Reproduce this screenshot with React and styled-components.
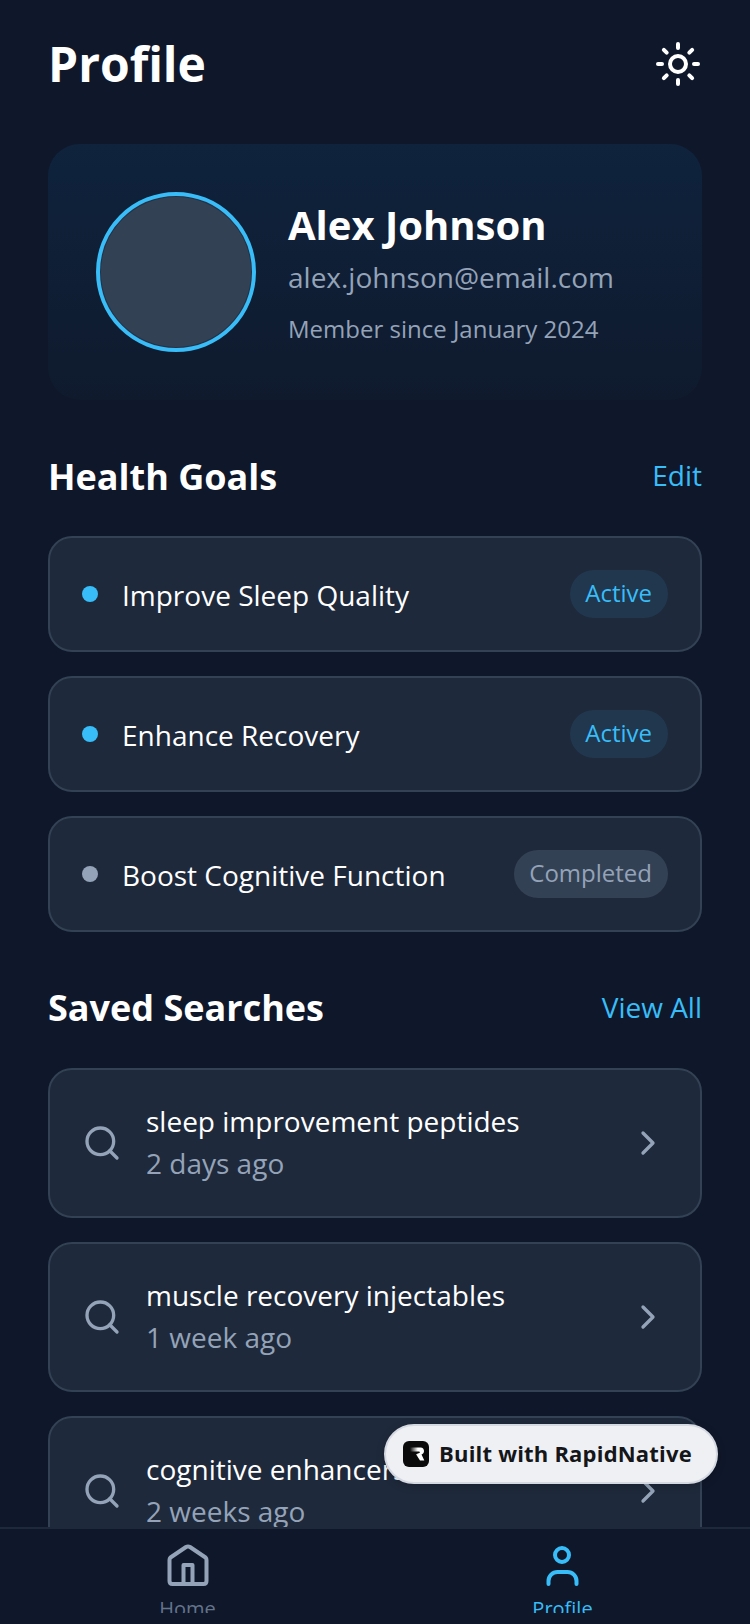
import React from "react";
import styled, { createGlobalStyle } from "styled-components";
import { Sun, Search, ChevronRight } from "lucide-react";

const Global = createGlobalStyle`
  html, body { margin: 0; padding: 0; background: #0f172a; }
  * { box-sizing: border-box; }
`;

const Screen = styled.div`
  position: relative;
  width: 750px;
  height: 1624px;
  display: flex;
  flex-direction: column;
  overflow: hidden;
  background: #0f172a;
  font-family: "Open Sans", "Noto Sans", sans-serif;
  color: #fff;
`;
const Main = styled.main`
  flex: 1;
  min-height: 0;
  overflow: hidden;
  padding: 32px 48px 0;
`;
const Header = styled.header`
  display: flex;
  justify-content: space-between;
  align-items: center;
  height: 64px;
  margin-bottom: 48px;
`;
const Title = styled.h1`
  margin: 0;
  font-size: 48px;
  line-height: 64px;
  font-weight: 700;
`;
const ThemeButton = styled.div`
  display: flex;
  color: #fff;
`;
const ProfileCard = styled.section`
  display: flex;
  align-items: center;
  gap: 32px;
  height: 256px;
  padding: 0 48px;
  border-radius: 32px;
  background: linear-gradient(180deg, #0f233d 0%, #0f1a2d 100%);
`;
const Avatar = styled.div`
  width: 160px;
  height: 160px;
  border-radius: 50%;
  border: 4px solid #38bdf8;
  background: #334155;
  box-shadow: inset 0 0 0 1px rgba(20, 35, 58, 0.5);
  flex: none;
`;
const Identity = styled.div`
  display: flex;
  flex-direction: column;
  padding-top: 6px;
`;
const Name = styled.div`
  font-size: 40px;
  line-height: 48px;
  font-weight: 700;
  margin-bottom: 8px;
`;
const Email = styled.div`
  font-size: 28px;
  line-height: 40px;
  color: #94a3b8;
  margin-bottom: 12px;
`;
const Since = styled.div`
  font-size: 24px;
  line-height: 40px;
  color: #94a3b8;
`;
const SectionHead = styled.div`
  display: flex;
  justify-content: space-between;
  align-items: center;
  height: 48px;
  margin-top: ${(p) => p.$top}px;
  margin-bottom: ${(p) => p.$bottom}px;
`;
const SectionTitle = styled.h2`
  margin: 0;
  font-size: 36px;
  line-height: 48px;
  font-weight: 700;
`;
const SectionLink = styled.span`
  font-size: 28px;
  line-height: 40px;
  color: #38bdf8;
  padding-bottom: ${(p) => p.$lift}px;
`;
const List = styled.div`
  display: flex;
  flex-direction: column;
  gap: 24px;
`;
const GoalRow = styled.div`
  display: flex;
  align-items: center;
  height: 116px;
  padding: 0 32px;
  background: #1e293b;
  border: 2px solid #334155;
  border-radius: 24px;
`;
const Dot = styled.span`
  width: 16px;
  height: 16px;
  border-radius: 50%;
  flex: none;
  background: ${(p) => (p.$active ? "#38bdf8" : "#94a3b8")};
  margin-right: 24px;
`;
const GoalName = styled.span`
  flex: 1;
  font-size: 28px;
  line-height: 40px;
  padding-top: 1px;
`;
const Pill = styled.span`
  height: 48px;
  padding: 0 16px 0 15px;
  border-radius: 24px;
  font-size: 24px;
  line-height: 46px;
  color: ${(p) => (p.$active ? "#38bdf8" : "#94a3b8")};
  background: ${(p) => (p.$active ? "rgba(56,189,248,0.1)" : "#334155")};
`;
const SearchRow = styled.div`
  display: flex;
  align-items: center;
  flex: none;
  height: 150px;
  padding: 0 32px;
  background: #1e293b;
  border: 2px solid #334155;
  border-radius: 24px;
  color: #94a3b8;
`;
const SearchText = styled.div`
  flex: 1;
  margin-left: 24px;
  padding-bottom: 2px;
  display: flex;
  flex-direction: column;
  gap: 2px;
`;
const Query = styled.div`
  font-size: 28px;
  line-height: 40px;
  color: #fff;
`;
const When = styled.div`
  font-size: 28px;
  line-height: 40px;
  color: #94a3b8;
`;
const TabBar = styled.nav`
  flex: none;
  height: 97px;
  display: flex;
  background: #0f172a;
  border-top: 2px solid #1e293b;
`;
const Tab = styled.div`
  flex: 1;
  display: flex;
  flex-direction: column;
  align-items: center;
  padding-top: 14px;
  color: ${(p) => (p.$active ? "#38bdf8" : "#94a3b8")};
`;
const TabLabel = styled.div`
  height: 18px;
  overflow: hidden;
  margin-top: 8px;
  font-size: 20px;
  line-height: 28px;
  color: ${(p) => (p.$active ? "#38bdf8" : "#64748b")};
`;
const Badge = styled.div`
  position: absolute;
  left: 384px;
  top: 1424px;
  width: 334px;
  height: 60px;
  display: flex;
  align-items: center;
  gap: 10px;
  padding-left: 17px;
  border-radius: 30px;
  background: #eff0f3;
  border: 2px solid #d5d9e2;
  box-shadow: 0 2px 8px rgba(0, 0, 0, 0.2);
  color: #14161a;
  font-size: 22px;
  letter-spacing: 0.2px;
  font-weight: 700;
`;
const BadgeText = styled.span`
  position: relative;
  top: -1px;
`;

const Logo = () => (
  <svg width="26" height="26" viewBox="0 0 26 26">
    <defs>
      <linearGradient id="rfade" x1="0" x2="1" y1="0" y2="0">
        <stop offset="0" stopColor="#0b0b0c" />
        <stop offset="0.55" stopColor="#ffffff" />
      </linearGradient>
    </defs>
    <rect width="26" height="26" rx="6" fill="#0b0b0c" />
    <path
      d="M7 6.500h10.500c2.300 0 3.500 1.600 3.500 3.500 0 1.900-1 3-2.500 3.500l2.800 6h-4.300l-4-6.200 3.300-1.300c.9-.4.7-1.600-.3-1.600H7z"
      fill="url(#rfade)"
    />
  </svg>
);
const HomeIcon = () => (
  <svg width="44" height="44" viewBox="0 0 44 44" fill="none" stroke="currentColor" strokeWidth="4" strokeLinejoin="round" strokeLinecap="round">
    <path d="M3.500 17 Q3.500 15.500 4.500 14.500 L20 4 Q22 2.800 24 4 L39.500 14.500 Q40.500 15.500 40.500 17 V38 Q40.500 41 37.500 41 H6.500 Q3.500 41 3.500 38 Z" />
    <path d="M17.500 41 V22 H26.500 V41" />
  </svg>
);
const PersonIcon = () => (
  <svg width="44" height="44" viewBox="0 0 44 44" fill="none" stroke="currentColor" strokeWidth="4" strokeLinecap="round">
    <circle cx="21" cy="12" r="7" />
    <path d="M7.500 41 v-3 a9 9 0 0 1 9-9 h10 a9 9 0 0 1 9 9 v3" />
  </svg>
);

const goals = [
  { name: "Improve Sleep Quality", status: "Active" },
  { name: "Enhance Recovery", status: "Active" },
  { name: "Boost Cognitive Function", status: "Completed" },
];
const searches = [
  { q: "sleep improvement peptides", t: "2 days ago" },
  { q: "muscle recovery injectables", t: "1 week ago" },
  { q: "cognitive enhancers", t: "2 weeks ago" },
];

export default function App() {
  return (
    <Screen>
      <Global />
      <Main>
        <Header>
          <Title>Profile</Title>
          <ThemeButton><Sun size={48} strokeWidth={2} /></ThemeButton>
        </Header>
        <ProfileCard>
          <Avatar />
          <Identity>
            <Name>Alex Johnson</Name>
            <Email>alex.johnson@email.com</Email>
            <Since>Member since January 2024</Since>
          </Identity>
        </ProfileCard>
        <SectionHead $top={53} $bottom={35}>
          <SectionTitle>Health Goals</SectionTitle>
          <SectionLink $lift={4}>Edit</SectionLink>
        </SectionHead>
        <List>
          {goals.map((g) => (
            <GoalRow key={g.name}>
              <Dot $active={g.status === "Active"} />
              <GoalName>{g.name}</GoalName>
              <Pill $active={g.status === "Active"}>{g.status}</Pill>
            </GoalRow>
          ))}
        </List>
        <SectionHead $top={52} $bottom={36}>
          <SectionTitle>Saved Searches</SectionTitle>
          <SectionLink $lift={2}>View All</SectionLink>
        </SectionHead>
        <List>
          {searches.map((s) => (
            <SearchRow key={s.q}>
              <Search size={40} strokeWidth={2} />
              <SearchText>
                <Query>{s.q}</Query>
                <When>{s.t}</When>
              </SearchText>
              <ChevronRight size={40} strokeWidth={2} />
            </SearchRow>
          ))}
        </List>
      </Main>
      <TabBar>
        <Tab><HomeIcon /><TabLabel>Home</TabLabel></Tab>
        <Tab $active><PersonIcon /><TabLabel $active>Profile</TabLabel></Tab>
      </TabBar>
      <Badge><Logo /><BadgeText>Built with RapidNative</BadgeText></Badge>
    </Screen>
  );
}
